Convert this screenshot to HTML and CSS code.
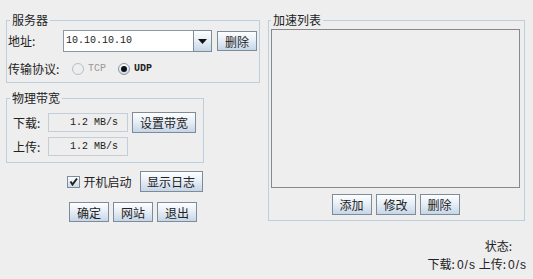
FILE: index.html
```html
<!DOCTYPE html>
<html lang="zh-CN">
<head>
    <meta charset="UTF-8">
    <meta name="viewport" content="width=device-width, initial-scale=1.0">
    <title>加速器</title>
    <link rel="stylesheet" href="styles.css">
</head>
<body>
    <div class="window">
        <div class="left">
            <fieldset class="group server">
                <legend>服务器</legend>
                <div class="row addr-row">
                    <span class="label addr-label">地址:</span>
                    <div class="combo">
                        <span class="combo-text">10.10.10.10</span>
                        <span class="combo-arrow">
                            <svg width="9" height="5" viewBox="0 0 9 5"><path d="M0 0H9L4.5 5Z" fill="#111"/></svg>
                        </span>
                    </div>
                    <button class="btn del-btn">删除</button>
                </div>
                <div class="row proto-row">
                    <span class="label proto-label">传输协议:</span>
                    <span class="radio disabled"><span class="radio-circle"></span>TCP</span>
                    <span class="radio checked"><span class="radio-circle"><span class="radio-dot"></span></span>UDP</span>
                </div>
            </fieldset>

            <fieldset class="group bandwidth">
                <legend>物理带宽</legend>
                <div class="row bw-row">
                    <span class="label bw-label">下载:</span>
                    <span class="field">1.2 MB/s</span>
                    <button class="btn set-btn">设置带宽</button>
                </div>
                <div class="row bw-row second">
                    <span class="label bw-label">上传:</span>
                    <span class="field">1.2 MB/s</span>
                </div>
            </fieldset>

            <div class="row startup-row">
                <span class="checkbox">
                    <svg width="9" height="9" viewBox="0 0 9 9"><path d="M1.5 4.5L3.5 7.5L8 1.5" fill="none" stroke="#222" stroke-width="2"/></svg>
                </span>
                <span class="check-label">开机启动</span>
                <button class="btn log-btn">显示日志</button>
            </div>

            <div class="row actions-row">
                <button class="btn small-btn">确定</button>
                <button class="btn small-btn">网站</button>
                <button class="btn small-btn">退出</button>
            </div>
        </div>

        <fieldset class="group speed-list">
            <legend>加速列表</legend>
            <div class="list"></div>
            <div class="row list-actions">
                <button class="btn small-btn">添加</button>
                <button class="btn small-btn">修改</button>
                <button class="btn small-btn">删除</button>
            </div>
        </fieldset>
    </div>

    <div class="status">
        <div class="status-title">状态:</div>
        <div class="status-speed">下载:<span class="num">0/s</span> 上传:<span class="num">0/s</span></div>
    </div>
</body>
</html>
```

FILE: styles.css
```css
body {
    margin: 0;
    background: #eeeeee;
    color: #222;
    font-family: "Noto Sans CJK SC", "Liberation Sans", sans-serif;
    font-size: 12px;
    line-height: 14px;
}
.window {
    display: flex;
    align-items: flex-start;
    gap: 8px;
    padding: 13px 0 0 6px;
}
.left {
    width: 254px;
}
.group {
    box-sizing: border-box;
    margin: 0;
    border: 1px solid #bccfdf;
}
.group legend {
    padding: 0 2px;
    font-size: 12px;
    line-height: 14px;
}
.row {
    display: flex;
    align-items: center;
}
.btn {
    box-sizing: border-box;
    height: 21px;
    padding: 0;
    font-family: inherit;
    font-size: 12px;
    color: #222;
    border: 1px solid #7e8c99;
    background: linear-gradient(to bottom, #fdfeff 0%, #e8eff7 45%, #c6d6e7 100%);
}

/* server */
.server {
    width: 254px;
    padding: 3px 2px 5px 1px;
}
.server legend {
    margin-left: 2px;
}
.addr-row {
    height: 22px;
}
.label {
    flex: none;
}
.addr-label {
    width: 55px;
}
.combo {
    display: flex;
    height: 22px;
}
.combo-text {
    box-sizing: border-box;
    width: 130px;
    height: 22px;
    padding: 0 2px;
    background: #fff;
    border: 1px solid #8a98a6;
    border-right: none;
    font-family: "Liberation Mono", monospace;
    font-size: 10px;
    line-height: 20px;
}
.combo-arrow {
    box-sizing: border-box;
    width: 19px;
    height: 22px;
    display: flex;
    align-items: center;
    justify-content: center;
    border: 1px solid #7e8c99;
    background: linear-gradient(to bottom, #fdfeff 0%, #e8eff7 45%, #c6d6e7 100%);
}
.del-btn {
    width: 40px;
    height: 20px;
    margin-left: 5px;
}
.proto-row {
    height: 16px;
    margin-top: 9px;
}
.proto-label {
    width: 64px;
}
.radio {
    display: flex;
    align-items: center;
    gap: 4px;
    font-family: "Liberation Mono", monospace;
    font-size: 10px;
    font-weight: bold;
}
.radio.disabled {
    width: 46px;
    color: #999;
    font-weight: normal;
}
.radio-circle {
    box-sizing: border-box;
    width: 12px;
    height: 12px;
    border-radius: 50%;
    border: 1px solid #8a98a6;
    background: linear-gradient(to bottom, #fdfeff, #cbd9e8);
    display: flex;
    align-items: center;
    justify-content: center;
}
.radio.disabled .radio-circle {
    border-color: #b5c0ca;
    background: #eeeeee;
}
.radio-dot {
    width: 6px;
    height: 6px;
    border-radius: 50%;
    background: #111;
}

/* bandwidth */
.bandwidth {
    width: 198px;
    margin-top: 8px;
    padding: 7px 3px 6px 6px;
}
.bandwidth legend {
    margin-left: -3px;
}
.bw-row {
    height: 21px;
}
.bw-row.second {
    height: 19px;
    margin-top: 4px;
}
.bw-label {
    width: 35px;
}
.field {
    box-sizing: border-box;
    width: 80px;
    height: 19px;
    padding-right: 9px;
    text-align: right;
    border: 1px solid #c3ced8;
    font-family: "Liberation Mono", monospace;
    font-size: 10px;
    line-height: 17px;
}
.set-btn {
    width: 64px;
    margin-left: 4px;
}

/* bottom of left column */
.startup-row {
    justify-content: center;
    height: 21px;
    margin-top: 8px;
    padding-left: 4px;
}
.checkbox {
    box-sizing: border-box;
    width: 13px;
    height: 12px;
    border: 1px solid #7e8c99;
    background: linear-gradient(to bottom, #fdfeff, #cbd9e8);
    display: flex;
    align-items: center;
    justify-content: center;
}
.check-label {
    margin-left: 3px;
}
.log-btn {
    width: 63px;
    margin-left: 8px;
}
.actions-row {
    justify-content: center;
    gap: 4px;
    margin-top: 10px;
}
.small-btn {
    width: 40px;
    height: 20px;
}

/* speed list */
.speed-list {
    width: 257px;
    padding: 2px 4px 5px 2px;
}
.list {
    box-sizing: border-box;
    height: 159px;
    border: 1px solid #888;
}
.list-actions {
    justify-content: center;
    gap: 4px;
    margin-top: 6px;
}
.list-actions .small-btn {
    height: 21px;
}

/* status */
.status {
    margin-top: 15px;
    padding-right: 6px;
    text-align: right;
    line-height: 18px;
}
.status-title {
    padding-right: 15px;
}
.num {
    margin-left: 2px;
    font-family: "Liberation Sans", sans-serif;
    font-size: 12px;
    letter-spacing: 1px;
}
```
